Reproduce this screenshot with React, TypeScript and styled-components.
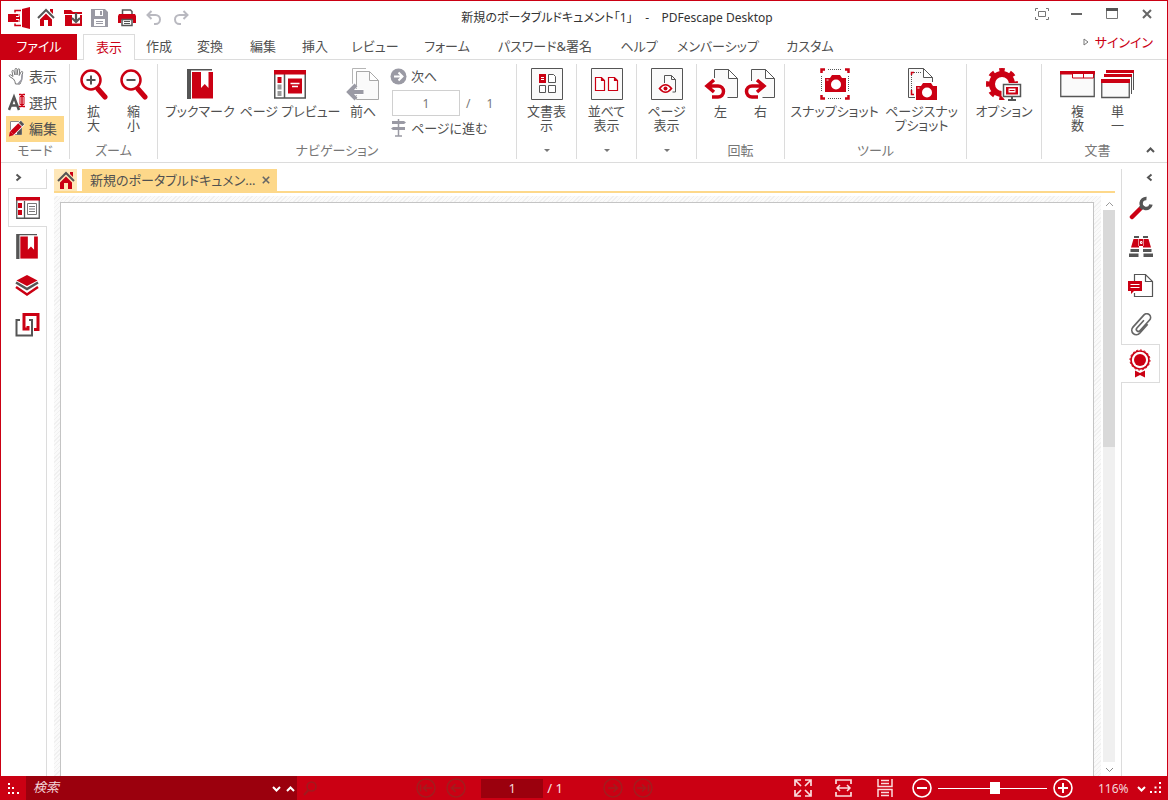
import React from 'react';
import styled, { createGlobalStyle, css } from 'styled-components';

const RED = '#cb0013';
const DARK_RED = '#9b000d';
const INK = '#555555';
const MUTED = '#9a9aa4';
const LINE = '#dcdcdc';
const AMBER = '#fdd88a';

const GlobalStyle = createGlobalStyle`
  * { box-sizing: border-box; }
  body { margin: 0; background: #fff; }
  body, button, input, select {
    font-family: "Noto Sans", "Noto Sans CJK JP", sans-serif;
    font-size: 13px;
    font-feature-settings: "palt";
    color: #505050;
  }
  button { border: 0; padding: 0; background: none; cursor: pointer; }
  svg { display: block; flex: none; }
`;

/* ---------- shell ---------- */

const Shell = styled.div`
  display: flex;
  flex-direction: column;
  height: 100vh;
  overflow: hidden;
  border: 1px solid ${RED};
  border-bottom: 0;
  background: #fff;
`;

const TitleBar = styled.header`
  display: flex;
  align-items: center;
  height: 33px;
  flex: none;
`;

const QuickAccess = styled.div`
  display: flex;
  padding-left: 4px;
`;

const QuickButton = styled.button`
  display: flex;
  align-items: center;
  justify-content: center;
  width: 27px;
  height: 28px;
`;

const WindowTitle = styled.h1`
  flex: 1;
  margin: 0;
  padding-left: 16px;
  text-align: center;
  font-size: 12px;
  font-weight: 400;
  line-height: 28px;
  white-space: pre;
  color: #333;
`;

const WindowButtons = styled.div`
  display: flex;
  padding: 0 3px 8px 0;
`;

const WindowButton = styled.button`
  display: flex;
  align-items: center;
  justify-content: center;
  width: 35px;
  height: 20px;
`;

/* ---------- ribbon tabs ---------- */

const TabRow = styled.nav`
  display: flex;
  flex: none;
  height: 26px;
  box-shadow: inset 0 -1px 0 ${LINE};
`;

const FileTab = styled.button`
  width: 76px;
  margin-right: 6px;
  padding-bottom: 3px;
  background: ${RED};
  color: #fff;
`;

const RibbonTab = styled.button<{ $width: number; $active?: boolean }>`
  width: ${p => p.$width}px;
  padding-bottom: 3px;
  white-space: nowrap;
  ${p => p.$active && css`
    border: 1px solid ${LINE};
    border-bottom: 0;
    background: #fff;
    color: ${RED};
  `}
`;

const SignIn = styled.a`
  display: flex;
  align-items: center;
  gap: 6px;
  height: 15px;
  margin-left: auto;
  padding-right: 14px;
  color: ${RED};
  text-decoration: none;
  white-space: nowrap;
`;

/* ---------- ribbon ---------- */

const Ribbon = styled.section`
  display: flex;
  flex: none;
  padding: 4px 7px 3px 0;
  border-bottom: 1px solid ${LINE};
`;

const GroupBox = styled.div<{ $width: number; $last?: boolean; $inset?: number }>`
  display: flex;
  flex-direction: column;
  flex: none;
  width: ${p => p.$width}px;
  height: 95px;
  padding-left: ${p => p.$inset ?? 0}px;
  border-right: ${p => (p.$last ? '0' : `1px solid ${LINE}`)};
`;

const GroupBody = styled.div`
  display: flex;
  flex: 1;
  justify-content: center;
`;

const GroupLabel = styled.div`
  display: flex;
  justify-content: center;
  align-items: center;
  height: 16px;
  padding-bottom: 2px;
  line-height: 14px;
  color: #777;
`;

const ModeList = styled.div`
  display: flex;
  flex-direction: column;
  flex: 1;
  padding: 0 5px;
`;

const ModeButton = styled.button<{ $active?: boolean }>`
  display: flex;
  align-items: center;
  gap: 3px;
  height: 26px;
  padding: 0 0 2px 2px;
  background: ${p => (p.$active ? AMBER : 'transparent')};
  font-size: 14px;
`;

const BigButton = styled.button<{ $width: number }>`
  display: flex;
  flex-direction: column;
  align-items: center;
  flex: none;
  width: ${p => p.$width}px;
  padding-top: 2px;
`;

const BigIcon = styled.span`
  display: flex;
  align-items: center;
  height: 36px;
  margin-bottom: 2px;
`;

const BigText = styled.span`
  line-height: 14px;
  white-space: pre;
`;

const NavColumn = styled.div`
  display: flex;
  flex-direction: column;
  width: 128px;
  padding-left: 4px;
`;

const NavRow = styled.div`
  display: flex;
  align-items: center;
  height: 26px;
`;

const NavButton = styled.button`
  display: flex;
  align-items: center;
  gap: 4px;
  height: 24px;
  padding-bottom: 2px;
  line-height: 16px;
  white-space: nowrap;
`;

const PageField = styled.input`
  width: 68px;
  height: 26px;
  margin: 0 6px 0 2px;
  border: 1px solid #d0d0d0;
  border-radius: 0;
  text-align: center;
  font-size: 12px;
  color: #777;
`;

const PageCount = styled.span`
  display: flex;
  gap: 16px;
  font-size: 12px;
  color: #777;
`;

const Collapse = styled.button`
  display: flex;
  align-items: center;
  justify-content: center;
  align-self: flex-end;
  width: 20px;
  height: 20px;
  margin-left: auto;
`;

/* ---------- work area ---------- */

const Work = styled.main`
  display: flex;
  flex: 1;
  min-height: 0;
  padding-top: 6px;
`;

const Rail = styled.aside<{ $side: 'left' | 'right' }>`
  display: flex;
  flex-direction: column;
  flex: none;
  width: 46px;
  align-items: ${p => (p.$side === 'left' ? 'flex-end' : 'flex-start')};
`;

const railEdge = css<{ $side: 'left' | 'right' }>`
  border: 0 solid ${LINE};
  ${p => (p.$side === 'left' ? 'border-right-width: 1px;' : 'border-left-width: 1px;')}
`;

const RailToggle = styled.button<{ $side: 'left' | 'right' }>`
  display: flex;
  align-items: center;
  width: 46px;
  height: 19px;
  padding: ${p => (p.$side === 'left' ? '0 0 2px 13px' : '0 0 2px 23px')};
  ${railEdge}
`;

const RailButton = styled.button<{ $side: 'left' | 'right'; $active?: boolean }>`
  display: flex;
  align-items: center;
  justify-content: center;
  flex: none;
  width: 39px;
  height: 39px;
  ${railEdge}
  ${p => p.$active && css`
    border-width: ${p.$side === 'left' ? '1px 0 1px 1px' : '1px 1px 1px 0'};
  `}
`;

const RailRest = styled.div<{ $side: 'left' | 'right' }>`
  flex: 1;
  width: 39px;
  ${railEdge}
`;

const Center = styled.section`
  display: flex;
  flex-direction: column;
  flex: 1;
  min-width: 0;
  padding: 0 6px 0 7px;
`;

const DocTabs = styled.div`
  display: flex;
  gap: 5px;
  height: 24px;
  flex: none;
  border-bottom: 2px solid ${AMBER};
`;

const HomeTab = styled.button`
  display: flex;
  align-items: center;
  justify-content: center;
  width: 23px;
  background: #fee7b8;
`;

const DocTab = styled.div`
  display: flex;
  align-items: center;
  width: 195px;
  padding: 0 7px 0 8px;
  background: ${AMBER};
`;

const DocName = styled.span`
  flex: 1;
  overflow: hidden;
  white-space: nowrap;
  line-height: 20px;
`;

const CloseTab = styled.button`
  display: flex;
`;

const CanvasRow = styled.div`
  display: flex;
  flex: 1;
  min-height: 0;
  padding-top: 3px;
`;

const Canvas = styled.div`
  display: flex;
  flex: 1;
  padding: 6px 7px 0 6px;
  background: repeating-linear-gradient(135deg, #fafafa 0 2px, #f0f0f0 2px 3px);
`;

const Paper = styled.article`
  flex: 1;
  border: 1px solid #c4c4c4;
  border-bottom: 0;
  background: #fff;
`;

const ScrollBar = styled.div`
  display: flex;
  flex-direction: column;
  width: 12px;
  margin-left: 2px;
`;

const ScrollArrow = styled.button`
  display: flex;
  align-items: center;
  justify-content: center;
  height: 14px;
`;

const ScrollTrack = styled.div`
  flex: 1;
  background: #f0f0f0;
`;

const ScrollThumb = styled.div`
  height: 43%;
  background: #d9d9d9;
`;

/* ---------- status bar ---------- */

const StatusBar = styled.footer`
  display: flex;
  align-items: center;
  flex: none;
  height: 24px;
  padding-right: 5px;
  background: ${RED};
  color: #fff;
`;

const StatusIcon = styled.button<{ $width: number }>`
  display: flex;
  align-items: center;
  justify-content: center;
  flex: none;
  width: ${p => p.$width}px;
  height: 24px;
`;

const SearchBox = styled.div`
  display: flex;
  align-items: center;
  width: 271px;
  height: 24px;
  background: ${DARK_RED};
`;

const SearchField = styled.input`
  flex: 1;
  min-width: 0;
  height: 24px;
  padding: 0 0 2px 7px;
  border: 0;
  background: none;
  color: #fff;
  font-style: italic;
  &::placeholder { color: #f3d6d8; opacity: 1; }
`;

const Gap = styled.div<{ $grow: number }>`
  flex: ${p => p.$grow} 1 0;
`;

const StatusPage = styled.input`
  width: 62px;
  height: 19px;
  margin-left: 10px;
  border: 0;
  border-radius: 0;
  background: ${DARK_RED};
  color: #f3d6d8;
  text-align: center;
`;

const StatusTotal = styled.span`
  width: 55px;
  padding-left: 4px;
  white-space: pre;
  color: #f9e4e5;
`;

const ZoomGroup = styled.div`
  display: flex;
  align-items: center;
  margin-left: 6px;
`;

const ZoomSlider = styled.input`
  appearance: none;
  width: 109px;
  height: 14px;
  margin: 0 5px;
  background: none;
  &::-webkit-slider-runnable-track {
    height: 1px;
    background: #fff;
  }
  &::-webkit-slider-thumb {
    appearance: none;
    width: 10px;
    height: 12px;
    margin-top: -6px;
    background: #fff;
  }
`;

const ZoomSelect = styled.select`
  appearance: none;
  width: 34px;
  height: 20px;
  margin-left: 24px;
  padding: 0;
  border: 0;
  background: none;
  color: #f3d6d8;
  font-size: 12px;
`;

/* ---------- icons ---------- */

type IconProps = { w: number; h: number; children: React.ReactNode };
const Icon = ({ w, h, children }: IconProps) => (
  <svg width={w} height={h} viewBox={`0 0 ${w} ${h}`} fill="none" aria-hidden="true">{children}</svg>
);

const Chevron = ({ dir, color = INK, w = 2 }: { dir: 'up' | 'down' | 'left' | 'right'; color?: string; w?: number }) => {
  const d = {
    up: 'M1 7 4.500 3.500 8 7',
    down: 'M1 3 4.500 6.500 8 3',
    left: 'M6.500 1.500 3 4.500 6.500 7.500',
    right: 'M2.500 1.500 6 4.500 2.500 7.500',
  }[dir];
  return <Icon w={9} h={9}><path d={d} stroke={color} strokeWidth={w} /></Icon>;
};

const AppLogo = () => (
  <Icon w={22} h={22}>
    <path d="M0 7h12v8H0z" fill={RED} />
    <path d="M7 5.500V3.500h6M7 16.500v2h6" stroke={RED} strokeWidth="1.500" />
    <path d="M11 7v2.500H8M11 15v-2.500H8" stroke="#fff" />
    <path d="M14 2 22 0v22l-8-2z" fill={RED} />
    <path d="M13.500 2v18" stroke="#fff" />
  </Icon>
);

const HomeIcon = () => (
  <Icon w={18} h={19}>
    <path d="M3 11.500 9 5.500l6 6V18h-4v-6H7v6H3z" fill={RED} />
    <path d="M13 1h3v5l-3-3z" fill={RED} />
    <path d="M1 10 9 2l8 8" stroke={INK} strokeWidth="2" />
  </Icon>
);

const OpenFolderIcon = () => (
  <Icon w={18} h={17}>
    <path d="M0 1h7l2 2h9v2H0z" fill={RED} />
    <path d="M1 6h17v11H1z" fill={RED} />
    <path d="M8 6h8v8.500H8z" fill="#fff" />
    <path d="M12 4v9M8 9l4 4 4-4" stroke={INK} strokeWidth="2.200" />
  </Icon>
);

const SaveIcon = () => (
  <Icon w={17} h={18}>
    <path d="M0 0h14l3 3v15H0z" fill={MUTED} />
    <path d="M4 1h8v6H4zM3 10h11v7H3z" fill="#fff" />
    <path d="M9 2h2v4H9z" fill={MUTED} />
    <path d="M5 12.500h7M5 14.500h7" stroke={MUTED} />
  </Icon>
);

const PrintIcon = () => (
  <Icon w={18} h={18}>
    <path d="M4.500 5V1h8l1.500 1.500V5" stroke={INK} fill="#fff" strokeWidth="1.500" />
    <path d="M1 5h16l1 2v7h-3v-3H3v3H0V7z" fill={RED} />
    <path d="M4 10.500h10v6H4z" stroke={INK} fill="#fff" strokeWidth="1.500" />
    <path d="M6 12.500h6M6 14.500h6" stroke={INK} />
  </Icon>
);

const UndoIcon = () => (
  <Icon w={16} h={16}>
    <path d="M5.500 1 1.500 5l4 4M2 5h7.500a4.500 4.500 0 0 1 0 9H8" stroke="#b9b9c0" strokeWidth="2" />
  </Icon>
);

const RedoIcon = () => (
  <Icon w={16} h={16}>
    <path d="m10.500 1 4 4-4 4M14 5H6.500a4.500 4.500 0 0 0 0 9H8" stroke="#b9b9c0" strokeWidth="2" />
  </Icon>
);

const FullFrameIcon = () => (
  <Icon w={14} h={12}>
    <path d="M3.500 3.500h7v5h-7zM.5 3V.5H3M11 .5h2.500V3M13.500 9v2.500H11M3 11.500H.5V9" stroke="#777" />
  </Icon>
);
const MinimizeIcon = () => <Icon w={12} h={12}><path d="M0 6h11" stroke="#666" strokeWidth="2" /></Icon>;
const MaximizeIcon = () => (
  <Icon w={12} h={11}><path d="M.5.5h11v10H.5z" stroke="#777" /><path d="M0 0h12v3H0z" fill={INK} /></Icon>
);
const CloseIcon = ({ size = 10 }: { size?: number }) => (
  <svg width={size} height={size} viewBox="0 0 10 10" fill="none" aria-hidden="true">
    <path d="m1 1 8 8M9 1 1 9" stroke="#666" strokeWidth="2" />
  </svg>
);

const HandIcon = () => (
  <Icon w={18} h={18}>
    <path d="M5.500 12 1.500 9.500C.5 8.500 2 7 3 8l2 1.500L4 4.500c0-1.500 1.500-1.500 2 0L7 8V2.500c0-1.500 2-1.500 2 0V8l.8-5.300c.2-1.400 2-1.200 1.900.2L11.200 8.500 13 5c.6-1.200 2-.6 1.700.6-.6 2.600-.7 4-.9 6.400-.1 2-1 3-1.800 5H7.500c-.2-2-.9-3.500-2-5z" fill="#fff" stroke="#777" />
    <path d="m10 17 3.500-4 .8-6" stroke={MUTED} strokeWidth="1.500" />
  </Icon>
);

const SelectIcon = () => (
  <Icon w={18} h={18}>
    <path d="M1 17 6 4l5 13M3 12.500h6" stroke={INK} strokeWidth="2.500" />
    <path d="M11 1.500h2l1 1 1-1h2M14 2v11M11 13.500h2l1-1 1 1h2" stroke={RED} strokeWidth="1.500" />
    <path d="M12 3.500h4v8h-4z" stroke={RED} />
  </Icon>
);

const EditIcon = () => (
  <Icon w={18} h={18}>
    <path d="M2.500 2.500h11v13h-11z" fill="#fff" stroke="#888" />
    <path d="M9 15.500V12l4.500-3v6.500z" fill={INK} />
    <path d="M3.500 14.500 14.500 3.500" stroke="#fff" strokeWidth="6.500" />
    <path d="m4 14 8-8" stroke={RED} strokeWidth="5" />
    <path d="M1 17.500 2 12l4 4z" fill={RED} />
    <path d="m12.500 5.500 2-2" stroke={INK} strokeWidth="5" />
  </Icon>
);

const Magnifier = ({ plus }: { plus?: boolean }) => (
  <Icon w={28} h={32}>
    <path d="m18 21 7 8" stroke={RED} strokeWidth="5" strokeLinecap="round" />
    <circle cx="11" cy="12" r="9.500" stroke={RED} strokeWidth="2.500" fill="#fff" />
    <path d={plus ? 'M6.500 12h9M11 7.500v9' : 'M6.500 12h9'} stroke={INK} strokeWidth="2" />
  </Icon>
);

const BookIcon = ({ small }: { small?: boolean }) => (
  <svg width={small ? 22 : 26} height={small ? 25 : 30} viewBox="0 0 26 30" fill="none" aria-hidden="true">
    <path d="M0 0h25v1.500H4V30H0z" fill={INK} />
    <path d="M5 3h21v26.500H5z" fill={RED} />
    <path d="M14 2h7.500v17l-3.750-4L14 19z" fill="#fff" />
  </svg>
);

const PreviewIcon = () => (
  <Icon w={32} h={29}>
    <path d="M.75 1h30.500v27H.75zM10.500 4v24" stroke={INK} strokeWidth="1.500" />
    <path d="M0 0h32v4.500H0zM3.500 7h4v6h-4zM14 8.500h14v15H14z" fill={RED} />
    <path d="M3.500 14.500h4v5h-4zM3.500 21h4v5h-4z" fill="#999" />
    <path d="M16.500 13.500h9M18 16.500h6" stroke="#fff" strokeWidth="1.500" />
  </Icon>
);

const PrevPageIcon = () => (
  <Icon w={34} h={34}>
    <path d="M6.500 19V1.500H20" stroke="#b5b5b5" />
    <path d="M10.500 4.500h13l9 9v19h-22zM23.500 4.500v9h9" fill="#fafafa" stroke="#a8a8a8" />
    <path d="M17.500 25H3.500M9.500 18l-7 7 7 7" stroke="#fff" strokeWidth="6" />
    <path d="M17.500 25H4M10 18l-7 7 7 7" stroke={MUTED} strokeWidth="4" />
  </Icon>
);

const NextIcon = () => (
  <Icon w={17} h={17}>
    <circle cx="8.500" cy="8.500" r="8" fill={MUTED} />
    <path d="M4 8.500h8M8.500 4.500l4 4-4 4" stroke="#fff" strokeWidth="2" />
  </Icon>
);

const SignpostIcon = () => (
  <Icon w={17} h={18}>
    <path d="M8.500 0v17M5 17h7" stroke={MUTED} strokeWidth="1.500" />
    <path d="M2 2h12l2 1.500L14 5H2zM15 8H3L1 9.500 3 11h12z" fill={MUTED} />
  </Icon>
);

const Framed = ({ children }: { children: React.ReactNode }) => (
  <Icon w={34} h={34}><path d="M1.500 1.500h31v31h-31z" fill="#fafafa" stroke={INK} />{children}</Icon>
);

const DocViewIcon = () => (
  <Framed>
    <path d="M9 7h7v9H9z" fill={RED} />
    <path d="M11 10.500h3M11 12.500h3" stroke="#fff" />
    <path d="M18.500 7.500h5l2 2v6h-7zM9.500 18.500h6v7h-6zM18.500 18.500h7v7h-7z" fill="#fff" stroke={INK} />
  </Framed>
);
const TileIcon = () => (
  <Framed>
    <path d="M5.500 10.500h6l3 3v10h-9zM11.500 10.500v3h3M18.500 10.500h6l3 3v10h-9zM24.500 10.500v3h3" fill="#fff" stroke={RED} strokeWidth="1.200" />
  </Framed>
);
const PageViewIcon = () => (
  <Framed>
    <path d="M14.500 16V8.500h7l4 4v12.500h-3M21.500 8.500v4h4" stroke={INK} />
    <path d="M9.500 21.500q6-7.500 12 0-6 7.500-12 0z" fill="#fff" stroke={RED} strokeWidth="1.700" />
    <circle cx="15.500" cy="21.500" r="2" fill={RED} />
  </Framed>
);

const RotateLeftIcon = () => (
  <Icon w={34} h={32}>
    <path d="M10.500 10V1.500h14l9 9v19h-10M24.500 1.500v9h9" fill="#fafafa" stroke={INK} />
    <path d="M11 11.500 3.500 18l7.500 6.500M4 18h10a5.500 5.500 0 0 1 0 11H8" stroke="#fff" strokeWidth="6" />
    <path d="M10 12 3 18l7 6M4 18h10a5.500 5.500 0 0 1 0 11H8" stroke={RED} strokeWidth="3.500" />
  </Icon>
);
const RotateRightIcon = () => (
  <Icon w={34} h={32}>
    <path d="M7.500 13V1.500h14l9 9v19h-12M21.500 1.500v9h9" fill="#fafafa" stroke={INK} />
    <path d="M12 11.500 19.500 18 12 24.500M19 18H9a5.500 5.500 0 0 0 0 11h6" stroke="#fff" strokeWidth="6" />
    <path d="m13 12 7 6-7 6M19 18H8a5.500 5.500 0 0 0 0 11h6" stroke={RED} strokeWidth="3.500" />
  </Icon>
);

const Camera = () => (
  <>
    <path d="M0 3h5l2-3h8l2 3h4v14H0z" fill={RED} />
    <circle cx="11" cy="9.500" r="5" fill="#fff" />
    <path d="M1.500 4.500h2v1h-2z" fill="#fff" />
  </>
);

const SnapshotIcon = () => (
  <Icon w={32} h={34}>
    <path d="M9 2.500h14M9 31.500h14M2.500 9v16M29.500 9v16" stroke={INK} strokeDasharray="1 1" />
    <path d="M2.500 6V2.500H6M26 2.500h3.500V6M29.500 28v3.500H26M6 31.500H2.500V28" stroke={RED} strokeWidth="2.500" />
    <g transform="translate(6 8)"><Camera /></g>
  </Icon>
);
const PageSnapshotIcon = () => (
  <Icon w={32} h={34}>
    <path d="M2.500 1.500h15l9 9v20h-24zM17.500 1.500v9h9" fill="#fafafa" stroke={INK} />
    <path d="M8 5.500h8M5.500 8v16" stroke={INK} strokeDasharray="1 1" />
    <path d="M5.500 8V5.500H8M5.500 23v4.500H8" stroke={RED} strokeWidth="1.500" />
    <path d="M9 15h23v19H9z" fill="#fff" />
    <g transform="translate(10 16)"><Camera /></g>
  </Icon>
);

const OptionsIcon = () => (
  <Icon w={36} h={34}>
    <circle cx="16" cy="17" r="14" stroke={RED} strokeWidth="4" pathLength={32} strokeDasharray="2 2" strokeDashoffset="1" />
    <circle cx="16" cy="17" r="10" stroke={RED} strokeWidth="6" />
    <path d="M15.500 16H36v18H20l-4.500-5z" fill="#fff" />
    <path d="M17.500 17.500h17v12h-17z" fill="#fff" stroke={INK} strokeWidth="1.500" />
    <path d="M26 30v3M22 33h8" stroke={INK} strokeWidth="2" />
    <path d="M20 20h12v7.500H20z" fill={RED} />
    <path d="M22.500 21.500h7v4h-7z" fill="#fff" />
    <path d="M23.500 23.500h5" stroke={RED} />
  </Icon>
);

const MultiIcon = () => (
  <Icon w={35} h={28}>
    <path d="M.75 2h33.500v24.500H.75z" fill="#fafafa" stroke={INK} strokeWidth="1.300" />
    <path d="M0 1h35v3.500H0z" fill={RED} />
    <path d="M12.500 4v4h21V4M23.500 4v4" stroke={RED} fill="#fff" />
  </Icon>
);
const SingleIcon = () => (
  <Icon w={34} h={30}>
    <path d="M32.500 3v18M30.500 8v17" stroke={INK} />
    <path d="M5 1h28v3H5zM3 5h28v3H3zM0 10h29v4H0z" fill={RED} />
    <path d="M.75 14v14.500h27.500V14" fill="#fafafa" stroke={INK} strokeWidth="1.300" />
  </Icon>
);

const PagesRailIcon = () => (
  <Icon w={24} h={22}>
    <path d="M.75 2h22.500v19.250H.75zM8.500 4v17" stroke={INK} strokeWidth="1.300" />
    <path d="M0 0h24v3.500H0zM2 6h4v5H2zM2 13h4v5H2z" fill={RED} />
    <path d="M11.500 6.500h9v11h-9zM13 9.500h6M13 12h6M13 14.500h6" stroke="#777" />
  </Icon>
);
const LayersIcon = () => (
  <Icon w={24} h={23}>
    <path d="m12 1 10.500 5.500L12 12 1.500 6.500z" fill={RED} />
    <path d="m1 8.500 11 6.500 11-6.500" stroke={INK} strokeWidth="2.500" />
    <path d="m1 13 11 7.500L23 13" stroke={RED} strokeWidth="2.500" />
  </Icon>
);
const LinkBoxIcon = () => (
  <Icon w={25} h={26}>
    <path d="M5 8H1.500v15.500h15.500V8h-3" stroke={INK} strokeWidth="2" />
    <path d="M13 14v3H9V2.500h14v15h-4" stroke={RED} strokeWidth="3" />
  </Icon>
);
const WrenchIcon = () => (
  <Icon w={24} h={24}>
    <path d="m3 21 8-8" stroke={RED} strokeWidth="4.500" strokeLinecap="round" />
    <path d="m11.500 12.500 3-3" stroke={INK} strokeWidth="4.500" />
    <path d="M17.500 2.500a5 5 0 1 0 4.500 6" stroke={INK} strokeWidth="3.500" />
  </Icon>
);
const BinocularsIcon = () => (
  <Icon w={24} h={22}>
    <path d="M5 0h5v2H5zM14 0h5v2h-5zM1.500 13H10v3H1.500zM14 13h8.500v3H14zM0 17.500h9.500V21H0zM14.500 17.500H24V21h-9.500z" fill={INK} />
    <path d="M4.500 3h15L22 11.500h-8V10h-4v1.500H2z" fill={RED} />
    <path d="M9.500 3v7M14.500 3v7" stroke="#e98a92" />
    <path d="M11.500 5.500h1.500v2h-1.500z" stroke="#fff" />
  </Icon>
);
const CommentIcon = () => (
  <Icon w={26} h={26}>
    <path d="M6.500 8V1.500h11l7 7v15h-18V20M17.500 1.500v7h7" stroke={INK} strokeWidth="1.200" />
    <path d="M0 8h14v10H6l-3 3v-3H0z" fill={RED} />
    <path d="M2.500 11.500h9M2.500 14.500h9" stroke="#fff" />
  </Icon>
);
const ClipIcon = () => (
  <Icon w={24} h={24}>
    <path
      d="M16.500 7v12a4.500 4.500 0 0 1-9 0V2.500a3.750 3.750 0 0 1 7.500 0v14.500a2 2 0 0 1-4 0V6.500"
      transform="rotate(42 12 12)" stroke="#666" strokeWidth="1.700"
    />
  </Icon>
);
const SealIcon = () => (
  <Icon w={24} h={30}>
    <path d="M7 21.500 12 24l5-2.500v7L12 26l-5 2.500z" fill={RED} />
    <circle cx="12" cy="11" r="10" fill="#fff" />
    <circle cx="12" cy="11" r="9" stroke={RED} strokeWidth="1.700" />
    <circle cx="12" cy="11" r="10" stroke={RED} strokeWidth="1" pathLength={32} strokeDasharray="1 1" />
    <circle cx="12" cy="11" r="6" fill={RED} />
  </Icon>
);

const ThumbDotsIcon = () => (
  <Icon w={13} h={13}>
    <path d="M1 1h2v2H1zM1 5h2v2H1zM1 10h2v2H1zM5 5h2v2H5zM5 10h2v2H5zM10 10h2v2h-2z" fill="#fff" />
  </Icon>
);
const GripIcon = () => (
  <Icon w={12} h={12}>
    <path d="M9 0h2v2H9zM9 4.500h2v2H9zM9 9h2v2H9zM4.500 4.500h2v2h-2zM4.500 9h2v2h-2zM0 9h2v2H0z" fill="#fff" />
  </Icon>
);
const FindIcon = () => (
  <Icon w={14} h={15}>
    <circle cx="8.500" cy="5.500" r="4.500" stroke="#a01a1e" strokeWidth="1.500" />
    <path d="m5.500 9-4.500 5" stroke="#a01a1e" strokeWidth="2" />
  </Icon>
);
const CircleArrow = ({ flip, end }: { flip?: boolean; end?: boolean }) => (
  <Icon w={20} h={20}>
    <g stroke="#a31c1e" transform={flip ? 'translate(20 0) scale(-1 1)' : undefined}>
      <circle cx="10" cy="10" r="9" strokeWidth="1.500" />
      <path d={end ? 'M16 10H7.500M11 6.500 7.500 10l3.500 3.500M4.500 6.500v7' : 'M15 10H5.500M9.500 6l-4 4 4 4'} strokeWidth="1.700" />
    </g>
  </Icon>
);
const ExpandIcon = () => (
  <Icon w={18} h={18}>
    <path d="M1 7V1h6M1.500 1.500 7 7M11 1h6v6M16.500 1.500 11 7M17 11v6h-6M16.500 16.500 11 11M7 17H1v-6M1.500 16.500 7 11" stroke="#fbdcde" strokeWidth="1.700" />
  </Icon>
);
const FitWidthIcon = () => (
  <Icon w={17} h={18}>
    <path d="M1 5V1h15v4M1 13v4h15v-4" stroke="#fbdcde" strokeWidth="1.700" />
    <path d="M2 9h13M5 6 2 9l3 3M12 6l3 3-3 3" stroke="#fbdcde" strokeWidth="1.500" />
  </Icon>
);
const ContinuousIcon = () => (
  <Icon w={16} h={18}>
    <path d="M1 0v7.500h14V0M1 18v-7.500h14V18M4 1.500h8M4 4.500h8M4 13.500h8M4 16.500h8" stroke="#fbdcde" strokeWidth="1.500" />
  </Icon>
);
const ZoomCircle = ({ plus }: { plus?: boolean }) => (
  <Icon w={20} h={20}>
    <circle cx="10" cy="10" r="9" stroke="#fff" strokeWidth="1.600" />
    <path d={plus ? 'M5 10h10M10 5v10' : 'M5 10h10'} stroke="#fff" strokeWidth="2" />
  </Icon>
);
const Caret = () => <Icon w={6} h={3}><path d="M0 0h6L3 3z" fill="#777" /></Icon>;

/* ---------- composition ---------- */

const ribbonTabs: [string, number][] = [
  ['表示', 52], ['作成', 48], ['変換', 54], ['編集', 52], ['挿入', 52], ['レビュー', 68], ['フォーム', 76],
  ['パスワード&署名', 120], ['ヘルプ', 68], ['メンバーシップ', 90], ['カスタム', 94],
];

const Big = ({ icon, text, width }: { icon: React.ReactNode; text: string; width: number }) => (
  <BigButton $width={width} type="button">
    <BigIcon>{icon}</BigIcon>
    <BigText>{text}</BigText>
  </BigButton>
);

type GroupProps = { label: React.ReactNode; width: number; inset?: number; last?: boolean; children: React.ReactNode };
const Group = ({ label, width, inset, last, children }: GroupProps) => (
  <GroupBox $width={width} $inset={inset} $last={last}>
    <GroupBody>{children}</GroupBody>
    <GroupLabel>{label}</GroupLabel>
  </GroupBox>
);

const leftPanels: [string, React.ReactNode][] = [
  ['ページ', <PagesRailIcon />], ['ブックマーク', <BookIcon small />], ['レイヤー', <LayersIcon />], ['リンク', <LinkBoxIcon />],
];
const rightPanels: [string, React.ReactNode][] = [
  ['ツール', <WrenchIcon />], ['検索', <BinocularsIcon />], ['コメント', <CommentIcon />], ['添付', <ClipIcon />], ['署名', <SealIcon />],
];

export default function App() {
  return (
    <Shell>
      <GlobalStyle />
      <TitleBar>
        <QuickAccess>
          <QuickButton aria-label="PDFescape"><AppLogo /></QuickButton>
          <QuickButton aria-label="ホーム"><HomeIcon /></QuickButton>
          <QuickButton aria-label="開く"><OpenFolderIcon /></QuickButton>
          <QuickButton aria-label="保存"><SaveIcon /></QuickButton>
          <QuickButton aria-label="印刷"><PrintIcon /></QuickButton>
          <QuickButton aria-label="元に戻す"><UndoIcon /></QuickButton>
          <QuickButton aria-label="やり直し"><RedoIcon /></QuickButton>
        </QuickAccess>
        <WindowTitle>{'新規のポータブルドキュメント「1」    -    PDFescape Desktop'}</WindowTitle>
        <WindowButtons>
          <WindowButton aria-label="全画面"><FullFrameIcon /></WindowButton>
          <WindowButton aria-label="最小化"><MinimizeIcon /></WindowButton>
          <WindowButton aria-label="最大化"><MaximizeIcon /></WindowButton>
          <WindowButton aria-label="閉じる"><CloseIcon /></WindowButton>
        </WindowButtons>
      </TitleBar>

      <TabRow>
        <FileTab type="button">ファイル</FileTab>
        {ribbonTabs.map(([name, width], i) => (
          <RibbonTab key={name} type="button" $width={width} $active={i === 0}>{name}</RibbonTab>
        ))}
        <SignIn href="#signin">
          <Icon w={6} h={8}><path d="M1 1v6l4-3z" stroke="#777" /></Icon>
          サインイン
        </SignIn>
      </TabRow>

      <Ribbon>
        <Group label="モード" width={69}>
          <ModeList>
            <ModeButton type="button"><HandIcon />表示</ModeButton>
            <ModeButton type="button"><SelectIcon />選択</ModeButton>
            <ModeButton type="button" $active><EditIcon />編集</ModeButton>
          </ModeList>
        </Group>
        <Group label="ズーム" width={88}>
          <Big width={40} icon={<Magnifier plus />} text={'拡\n大'} />
          <Big width={40} icon={<Magnifier />} text={'縮\n小'} />
        </Group>
        <Group label="ナビゲーション" width={359}>
          <Big width={80} icon={<BookIcon />} text="ブックマーク" />
          <Big width={100} icon={<PreviewIcon />} text="ページ プレビュー" />
          <Big width={46} icon={<PrevPageIcon />} text="前へ" />
          <NavColumn>
            <NavRow><NavButton type="button"><NextIcon />次へ</NavButton></NavRow>
            <NavRow>
              <PageField aria-label="ページ番号" defaultValue="1" />
              <PageCount><span>/</span><span>1</span></PageCount>
            </NavRow>
            <NavRow><NavButton type="button"><SignpostIcon />ページに進む</NavButton></NavRow>
          </NavColumn>
        </Group>
        <Group label={<Caret />} width={60}>
          <Big width={58} icon={<DocViewIcon />} text={'文書表\n示'} />
        </Group>
        <Group label={<Caret />} width={60}>
          <Big width={58} icon={<TileIcon />} text={'並べて\n表示'} />
        </Group>
        <Group label={<Caret />} width={60}>
          <Big width={58} icon={<PageViewIcon />} text={'ページ\n表示'} />
        </Group>
        <Group label="回転" width={88}>
          <Big width={40} icon={<RotateLeftIcon />} text="左" />
          <Big width={40} icon={<RotateRightIcon />} text="右" />
        </Group>
        <Group label="ツール" width={182}>
          <Big width={92} icon={<SnapshotIcon />} text="スナップショット" />
          <Big width={82} icon={<PageSnapshotIcon />} text={'ページスナッ\nプショット'} />
        </Group>
        <Group label="" width={75}>
          <Big width={72} icon={<OptionsIcon />} text="オプション" />
        </Group>
        <Group label="文書" width={98} inset={13} last>
          <Big width={40} icon={<MultiIcon />} text={'複\n数'} />
          <Big width={40} icon={<SingleIcon />} text={'単\n一'} />
        </Group>
        <Collapse type="button" aria-label="リボンを折りたたむ"><Chevron dir="up" /></Collapse>
      </Ribbon>

      <Work>
        <Rail $side="left">
          <RailToggle $side="left" aria-label="左パネルを開く"><Chevron dir="right" /></RailToggle>
          {leftPanels.map(([name, icon], i) => (
            <RailButton key={name} type="button" aria-label={name} $side="left" $active={i === 0}>{icon}</RailButton>
          ))}
          <RailRest $side="left" />
        </Rail>

        <Center>
          <DocTabs>
            <HomeTab type="button" aria-label="ホーム"><HomeIcon /></HomeTab>
            <DocTab>
              <DocName>新規のポータブルドキュメン...</DocName>
              <CloseTab type="button" aria-label="タブを閉じる"><CloseIcon size={8} /></CloseTab>
            </DocTab>
          </DocTabs>
          <CanvasRow>
            <Canvas><Paper /></Canvas>
            <ScrollBar>
              <ScrollArrow type="button" aria-label="上へ"><Chevron dir="up" color="#999" w={1} /></ScrollArrow>
              <ScrollTrack><ScrollThumb /></ScrollTrack>
              <ScrollArrow type="button" aria-label="下へ"><Chevron dir="down" color="#888" w={1} /></ScrollArrow>
            </ScrollBar>
          </CanvasRow>
        </Center>

        <Rail $side="right">
          <RailToggle $side="right" aria-label="右パネルを開く"><Chevron dir="left" /></RailToggle>
          {rightPanels.map(([name, icon], i) => (
            <RailButton key={name} type="button" aria-label={name} $side="right" $active={i === 4}>{icon}</RailButton>
          ))}
          <RailRest $side="right" />
        </Rail>
      </Work>

      <StatusBar>
        <StatusIcon $width={25} aria-label="サムネイル"><ThumbDotsIcon /></StatusIcon>
        <SearchBox>
          <SearchField aria-label="検索" placeholder="検索" />
          <StatusIcon $width={14} aria-label="次を検索"><Chevron dir="down" color="#fff" /></StatusIcon>
          <StatusIcon $width={14} aria-label="前を検索"><Chevron dir="up" color="#fff" /></StatusIcon>
        </SearchBox>
        <StatusIcon $width={26} aria-label="検索を実行"><FindIcon /></StatusIcon>
        <Gap $grow={5} />
        <StatusIcon $width={30} aria-label="最初のページ"><CircleArrow end /></StatusIcon>
        <StatusIcon $width={30} aria-label="前のページ"><CircleArrow /></StatusIcon>
        <StatusPage aria-label="現在のページ" defaultValue="1" />
        <StatusTotal>/ 1</StatusTotal>
        <StatusIcon $width={30} aria-label="次のページ"><CircleArrow flip /></StatusIcon>
        <StatusIcon $width={30} aria-label="最後のページ"><CircleArrow flip end /></StatusIcon>
        <Gap $grow={7} />
        <StatusIcon $width={41} aria-label="全体表示"><ExpandIcon /></StatusIcon>
        <StatusIcon $width={41} aria-label="幅に合わせる"><FitWidthIcon /></StatusIcon>
        <StatusIcon $width={41} aria-label="連続表示"><ContinuousIcon /></StatusIcon>
        <ZoomGroup>
          <StatusIcon $width={22} aria-label="縮小"><ZoomCircle /></StatusIcon>
          <ZoomSlider type="range" min={0} max={100} defaultValue={53} aria-label="ズーム" />
          <StatusIcon $width={22} aria-label="拡大"><ZoomCircle plus /></StatusIcon>
        </ZoomGroup>
        <ZoomSelect aria-label="倍率" defaultValue="116%"><option>116%</option></ZoomSelect>
        <StatusIcon $width={18} aria-label="倍率を選択"><Chevron dir="down" color="#fff" /></StatusIcon>
        <GripIcon />
      </StatusBar>
    </Shell>
  );
}
